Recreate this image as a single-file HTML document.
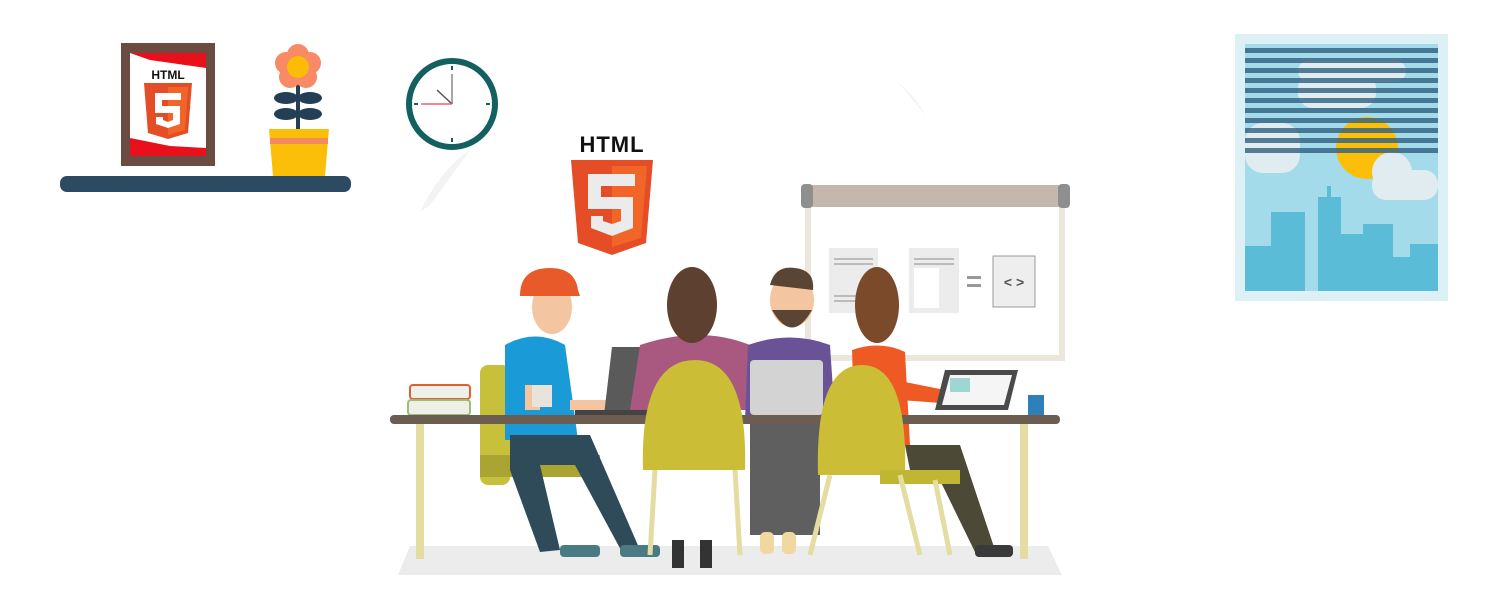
<!DOCTYPE html>
<html><head><meta charset="utf-8"><style>
html,body{margin:0;padding:0;background:#fff;width:1500px;height:594px;overflow:hidden}
svg{display:block}
text{font-family:"Liberation Sans",sans-serif;font-weight:bold}
</style></head><body>
<svg width="1500" height="594" viewBox="0 0 1500 594" xmlns="http://www.w3.org/2000/svg">
<!-- faint backdrop wedges -->
<path d="M420 212 Q440 170 470 150 L430 205 Z" fill="#f3f3f3"/>
<path d="M895 80 Q915 95 925 115 L905 90 Z" fill="#f3f3f3"/>
<!-- shelf -->
<rect x="60" y="176" width="291" height="16" rx="7" fill="#2c4a61"/>
<!-- frame -->
<rect x="121" y="43" width="94" height="123" fill="#6b4c42"/>
<rect x="130" y="53" width="76" height="103" fill="#fff"/>
<polygon points="130,53 206,53 206,68 150,60" fill="#e8101b"/>
<polygon points="130,156 206,156 206,148 170,146 130,138" fill="#e8101b"/>
<text x="168" y="79" font-size="12" text-anchor="middle" fill="#111">HTML</text>
<polygon points="144,83 192,83 188,133 168,139 148,133" fill="#e44d26"/>
<polygon points="168,87 188,87 185,130 168,135" fill="#f16529"/>
<path d="M155 93 H181 V100 H162 V106 H180 V124 L168 128 L156 124 V117 H163 V120 L168 122 L173 120 V113 H155 Z" fill="#fff"/>
<!-- flower -->
<line x1="298" y1="75" x2="298" y2="130" stroke="#243f55" stroke-width="4"/>
<ellipse cx="286" cy="98" rx="12" ry="6" fill="#243f55"/><ellipse cx="310" cy="98" rx="12" ry="6" fill="#243f55"/>
<ellipse cx="286" cy="114" rx="12" ry="6" fill="#243f55"/><ellipse cx="310" cy="114" rx="12" ry="6" fill="#243f55"/>
<g fill="#f88a66"><circle cx="298" cy="55" r="11"/><circle cx="310" cy="63" r="11"/><circle cx="306" cy="77" r="11"/><circle cx="290" cy="77" r="11"/><circle cx="286" cy="63" r="11"/></g>
<circle cx="298" cy="67" r="11" fill="#fbbc05"/>
<polygon points="269,129 329,129 325,176 273,176" fill="#fbbf0a"/>
<rect x="270" y="138" width="58" height="6" fill="#f28a5e"/>
<!-- clock -->
<circle cx="452" cy="104" r="43" fill="#fff" stroke="#12605f" stroke-width="6"/>
<g stroke="#12605f" stroke-width="2"><line x1="452" y1="66" x2="452" y2="70"/><line x1="452" y1="138" x2="452" y2="142"/><line x1="414" y1="104" x2="418" y2="104"/><line x1="486" y1="104" x2="490" y2="104"/></g>
<line x1="452" y1="104" x2="452" y2="74" stroke="#888" stroke-width="1.5"/>
<line x1="452" y1="104" x2="437" y2="90" stroke="#555" stroke-width="1.5"/>
<line x1="452" y1="104" x2="421" y2="104" stroke="#f06070" stroke-width="1.5"/>
<!-- window -->
<rect x="1235" y="34" width="213" height="267" fill="#ddf0f5"/>
<rect x="1245" y="44" width="193" height="247" fill="#a4dbeb"/>
<circle cx="1367" cy="148" r="31" fill="#fbbf0a"/>
<g fill="#e0ecef"><rect x="1298" y="60" width="108" height="22" rx="11"/><rect x="1298" y="73" width="78" height="35" rx="15"/>
<rect x="1245" y="123" width="55" height="50" rx="18"/><rect x="1372" y="170" width="66" height="30" rx="14"/><circle cx="1392" cy="172" r="20"/></g>
<g fill="#5bbcd8"><rect x="1245" y="246" width="27" height="45"/><rect x="1271" y="212" width="34" height="79"/><rect x="1318" y="197" width="23" height="94"/><rect x="1327" y="186" width="4" height="12"/><rect x="1341" y="234" width="22" height="57"/><rect x="1363" y="224" width="30" height="67"/><rect x="1392" y="257" width="18" height="34"/><rect x="1410" y="244" width="28" height="47"/></g>
<g fill="#2f5f80" opacity="0.8">
<rect x="1245" y="48" width="193" height="5"/><rect x="1245" y="58" width="193" height="5"/><rect x="1245" y="68" width="193" height="5"/><rect x="1245" y="78" width="193" height="5"/><rect x="1245" y="88" width="193" height="5"/><rect x="1245" y="98" width="193" height="5"/><rect x="1245" y="108" width="193" height="5"/><rect x="1245" y="118" width="193" height="5"/><rect x="1245" y="128" width="193" height="5"/><rect x="1245" y="138" width="193" height="5"/><rect x="1245" y="148" width="193" height="5"/></g>
<!-- floor -->
<polygon points="410,546 1048,546 1062,575 398,575" fill="#ececec"/>
<!-- whiteboard -->
<rect x="808" y="200" width="254" height="158" fill="#fff" stroke="#ebe7dc" stroke-width="6"/>
<rect x="803" y="185" width="265" height="22" rx="5" fill="#c4b8ae"/>
<rect x="801" y="184" width="12" height="24" rx="4" fill="#8f8f8f"/><rect x="1058" y="184" width="12" height="24" rx="4" fill="#8f8f8f"/>
<rect x="829" y="248" width="49" height="65" fill="#ececec"/>
<g fill="#bbb"><rect x="834" y="258" width="39" height="2"/><rect x="834" y="263" width="39" height="2"/><rect x="834" y="295" width="30" height="2"/><rect x="834" y="300" width="30" height="2"/></g>
<rect x="909" y="248" width="50" height="65" fill="#ececec"/><rect x="914" y="268" width="25" height="40" fill="#fff"/>
<g fill="#bbb"><rect x="914" y="258" width="40" height="2"/><rect x="914" y="263" width="40" height="2"/></g>
<rect x="967" y="276" width="14" height="3" fill="#999"/><rect x="967" y="284" width="14" height="3" fill="#999"/>
<rect x="993" y="256" width="42" height="51" fill="#eee" stroke="#999"/>
<text x="1014" y="287" font-size="14" text-anchor="middle" fill="#555">&lt; &gt;</text>
<!-- HTML5 logo -->
<text x="612" y="152" font-size="22" text-anchor="middle" fill="#111" letter-spacing="1">HTML</text>
<polygon points="571,160 653,160 646,243 612,255 578,243" fill="#e44d26"/>
<polygon points="612,166 647,166 641,238 612,247" fill="#f16529"/>
<path d="M588 174 H635 V186 H601 V197 H633 V228 L612 236 L591 228 V216 H603 V221 L612 224 L621 221 V209 H588 Z" fill="#ebebeb"/>
<!-- books -->
<rect x="410" y="385" width="60" height="14" rx="3" fill="#f0f0ea" stroke="#e06030" stroke-width="2"/>
<rect x="408" y="400" width="62" height="15" rx="3" fill="#eef0e8" stroke="#9bbd7a" stroke-width="2"/>
<!-- chair 1 -->
<rect x="480" y="365" width="30" height="120" rx="8" fill="#c7c03a"/>
<rect x="480" y="455" width="120" height="22" fill="#aaa432"/>
<!-- person 1 -->
<path d="M505 345 Q535 328 565 345 L578 440 L505 440 Z" fill="#1a9ad6"/>
<path d="M510 435 H590 L640 550 L622 552 L575 465 H540 L560 550 L540 552 L510 470 Z" fill="#2f4b5a"/>
<rect x="525" y="385" width="15" height="25" fill="#f3c5a0"/><rect x="570" y="400" width="45" height="10" fill="#f3c5a0"/>
<rect x="532" y="385" width="20" height="22" fill="#e8e4dc"/>
<ellipse cx="552" cy="307" rx="20" ry="27" fill="#f3c5a0"/>
<path d="M520 296 Q520 268 550 268 Q575 268 578 290 L580 296 Z" fill="#e85a2a"/>
<rect x="560" y="545" width="40" height="12" rx="4" fill="#4a7b85"/><rect x="620" y="545" width="40" height="12" rx="4" fill="#4a7b85"/>
<!-- laptop dark -->
<polygon points="612,347 650,347 650,415 604,415" fill="#5a5a5a"/>
<rect x="575" y="410" width="80" height="8" fill="#444"/>
<!-- person 2 -->
<path d="M640 345 Q700 325 750 345 L765 410 L630 410 Z" fill="#a9587f"/>
<ellipse cx="692" cy="305" rx="25" ry="38" fill="#5e4030"/>
<!-- person 3 -->
<path d="M748 345 Q790 330 830 345 L835 420 L745 420 Z" fill="#6a5296"/>
<ellipse cx="792" cy="300" rx="22" ry="27" fill="#f3c5a0"/>
<path d="M770 285 Q775 265 795 268 Q815 270 813 290 Z" fill="#5a4535"/>
<path d="M772 310 Q792 345 812 310 Z" fill="#5a4535"/>
<rect x="750" y="360" width="73" height="55" rx="4" fill="#d3d3d3"/>
<rect x="750" y="420" width="70" height="115" fill="#5f5f5f"/>
<rect x="760" y="532" width="14" height="22" rx="5" fill="#f0d8a0"/><rect x="782" y="532" width="14" height="22" rx="5" fill="#f0d8a0"/>
<!-- person 4 -->
<path d="M852 350 Q880 340 905 352 L910 445 L855 445 Z" fill="#ef5a24"/>
<path d="M895 380 L970 395 L968 405 L900 400 Z" fill="#ef5a24"/>
<ellipse cx="877" cy="305" rx="22" ry="38" fill="#7a4a2a"/>
<path d="M905 445 H960 L995 550 L975 552 L935 470 L910 470 Z" fill="#4c4a36"/>
<rect x="975" y="545" width="38" height="12" rx="4" fill="#3a3a3a"/>
<polygon points="945,370 1018,370 1008,410 935,410" fill="#4a4a4a"/><polygon points="950,375 1012,375 1004,405 942,405" fill="#f5f5f5"/>
<rect x="950" y="378" width="20" height="14" fill="#9fd6d2"/>
<rect x="1028" y="395" width="16" height="20" fill="#2f7fb8"/>
<!-- table -->
<rect x="390" y="415" width="670" height="9" rx="4" fill="#6b5d4f"/>
<rect x="416" y="424" width="8" height="135" fill="#e4dca0"/><rect x="1020" y="424" width="8" height="135" fill="#e4dca0"/>
<!-- chair 2 -->
<path d="M643 470 Q640 360 695 360 Q748 360 745 470 Z" fill="#cbbd36"/>
<g stroke="#e4dca0" stroke-width="5"><line x1="655" y1="470" x2="650" y2="555"/><line x1="735" y1="470" x2="740" y2="555"/></g>
<rect x="672" y="540" width="12" height="28" fill="#333"/><rect x="700" y="540" width="12" height="28" fill="#333"/>
<!-- chair 3 -->
<path d="M818 475 Q815 365 862 365 Q908 365 905 475 Z" fill="#cbbd36"/>
<rect x="880" y="470" width="80" height="14" fill="#c0b632"/>
<g stroke="#e4dca0" stroke-width="5"><line x1="830" y1="475" x2="810" y2="555"/><line x1="900" y1="475" x2="920" y2="555"/><line x1="935" y1="480" x2="950" y2="555"/></g>
</svg>
</body></html>
